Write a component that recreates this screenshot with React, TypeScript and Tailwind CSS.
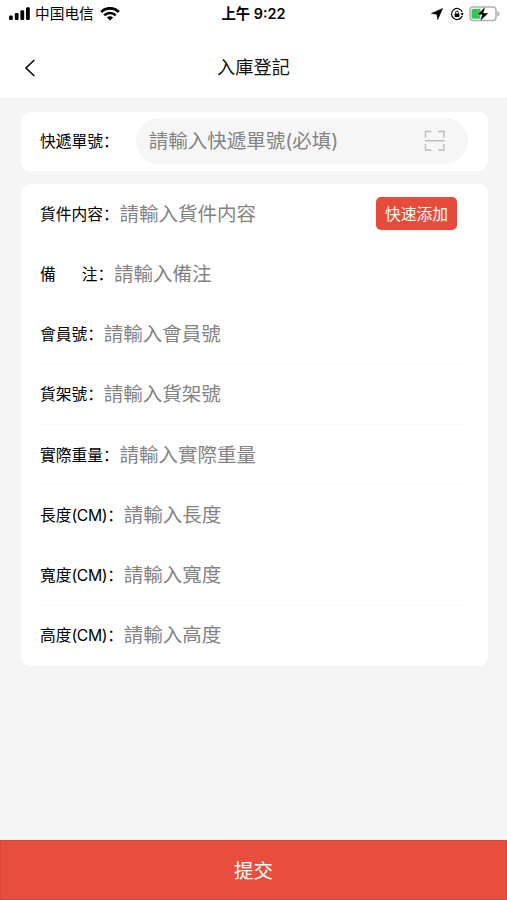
import { useState } from 'react'

type Field = {
  key: string
  label: string
  unit?: string
  placeholder: string
  line?: boolean
  action?: string
}

const FIELDS: Field[] = [
  { key: 'content', label: '貨件内容', placeholder: '請輸入貨件内容', action: '快速添加' },
  { key: 'remark', label: '備注', placeholder: '請輸入備注' },
  { key: 'member', label: '會員號', placeholder: '請輸入會員號', line: true },
  { key: 'shelf', label: '貨架號', placeholder: '請輸入貨架號', line: true },
  { key: 'weight', label: '實際重量', placeholder: '請輸入實際重量', line: true },
  { key: 'length', label: '長度', unit: '(CM)', placeholder: '請輸入長度' },
  { key: 'width', label: '寬度', unit: '(CM)', placeholder: '請輸入寬度', line: true },
  { key: 'height', label: '高度', unit: '(CM)', placeholder: '請輸入高度' },
]

const INPUT =
  'min-w-0 flex-1 bg-transparent text-[19.5px] text-[#333] outline-none placeholder:text-[#838383]'

function StatusBar() {
  return (
    <div className="grid h-7 grid-cols-3 items-center pl-[9px] pr-[7px] text-black">
      <div className="flex items-center">
        <svg width="22" height="14" viewBox="0 0 22 14" fill="currentColor">
          <rect x="0" y="8.5" width="3.8" height="4.5" rx="1.2" />
          <rect x="5.8" y="6" width="3.8" height="7" rx="1.2" />
          <rect x="11.4" y="3.2" width="3.8" height="9.8" rx="1.2" />
          <rect x="17" y="0.2" width="3.8" height="12.8" rx="1.2" />
        </svg>
        <span className="ml-[4px] text-[14.7px] leading-none">中国电信</span>
        <svg className="ml-[6px]" width="20" height="14" viewBox="0 0 20 14" fill="none" stroke="currentColor">
          <path d="M1.2 4.9a12.5 12.5 0 0 1 17.6 0" strokeWidth="2.8" />
          <path d="M4.3 8.4a8.1 8.1 0 0 1 11.4 0" strokeWidth="2.6" />
          <path d="M10 13.4 6.9 10.6a4.5 4.5 0 0 1 6.2 0z" fill="currentColor" stroke="none" />
        </svg>
      </div>
      <div className="pr-[2px] text-center text-[14.4px] font-semibold leading-none">上午 9:22</div>
      <div className="flex items-center justify-end">
        <svg width="12" height="12" viewBox="0 0 12 12" fill="currentColor">
          <path d="M11.6.5 6.7 11.6 5.9 6.3.5 5.4z" stroke="currentColor" strokeWidth="0.6" />
        </svg>
        <svg className="ml-[7px]" width="14" height="14" viewBox="0 0 14 14" fill="none" stroke="currentColor">
          <path d="M12.2 5A5.5 5.5 0 1 0 12.2 9" strokeWidth="1.2" />
          <path d="m10.4 6.2 3.2-.3-1 2.9z" fill="currentColor" stroke="none" />
          <rect x="4.6" y="6.5" width="4.8" height="3.5" rx="0.5" fill="currentColor" stroke="none" />
          <path d="M5.6 6.8V5.5a1.4 1.4 0 0 1 2.8 0v1.3" strokeWidth="0.9" />
        </svg>
        <svg className="ml-[5px]" width="31" height="16" viewBox="0 0 31 16">
          <rect x="1" y="1" width="26" height="13.4" rx="3.2" fill="none" stroke="#b0b0b0" strokeWidth="1.5" />
          <path d="M28.3 5c1.5.5 2.1 1.5 2.1 2.7s-.6 2.2-2.1 2.7z" fill="#b0b0b0" />
          <path d="M4.5 2.7h7v10h-7a2 2 0 0 1-2-2v-6a2 2 0 0 1 2-2z" fill="#35c759" />
          <path d="M16.4.4 8.2 8.8h4.9L10.9 15.4l8.6-8.5h-5z" fill="#000" stroke="#fff" strokeWidth="0.4" />
        </svg>
      </div>
    </div>
  )
}

function NavBar() {
  return (
    <div className="grid h-[69.5px] grid-cols-3 items-center pt-[11px]">
      <button className="w-10 pl-6" aria-label="返回">
        <svg width="12" height="18" viewBox="0 0 12 18" fill="none" stroke="#111" strokeWidth="1.7">
          <path d="M10.3 1 2 9l8.3 8" />
        </svg>
      </button>
      <h1 className="pb-[2px] text-center text-[18.2px] leading-none text-[#111]">入庫登記</h1>
    </div>
  )
}

function ScanIcon() {
  return (
    <svg className="shrink-0" width="22" height="22" viewBox="0 0 22 22" fill="none" stroke="#bdbdbd" strokeWidth="1.4">
      <path d="M1.5 7.5v-6h6M14 1.5h6v6M20 14v6h-6M7.5 20h-6v-6M1 10.8h19.5" />
    </svg>
  )
}

function Label({ text, unit }: { text: string; unit?: string }) {
  return (
    <span className="flex shrink-0 items-baseline whitespace-nowrap pt-[1.5px]">
      {/* 備注两字撑开对齐 */}
      {text === '備注' ? (
        <span className="flex gap-[26px]">
          <span>備</span>
          <span>注</span>
        </span>
      ) : (
        <span>{text}</span>
      )}
      {unit && <span className="tracking-[-0.4px]">{unit}</span>}
      <span>：</span>
    </span>
  )
}

export default function App() {
  const [tracking, setTracking] = useState('')
  const [values, setValues] = useState<Record<string, string>>({})

  return (
    <div className="flex h-[900px] w-full flex-col bg-[#f5f5f5] font-['Inter','Noto_Sans_CJK_SC',sans-serif] text-black">
      <header className="h-[97.5px] shrink-0 bg-white">
        <StatusBar />
        <NavBar />
      </header>

      <main className="flex-1 pl-[21px] pr-[19.5px] pt-[14px] text-[15.75px] leading-none">
        <div className="flex h-[59px] items-center rounded-[9px] bg-white pl-[19px] pr-5">
          <Label text="快遞單號" />
          <div className="ml-[17px] flex h-[46px] min-w-0 flex-1 items-center rounded-full bg-[#f6f6f6] pl-[13px] pr-[22px]">
            <input
              className={INPUT}
              placeholder="請輸入快遞單號(必填)"
              value={tracking}
              onChange={(e) => setTracking(e.target.value)}
            />
            <ScanIcon />
          </div>
        </div>

        <div className="mt-[13.8px] rounded-[9px] bg-white pl-[19px] pr-[24px]">
          {FIELDS.map((f) => (
            <div
              key={f.key}
              className={`flex h-[60.2px] items-center border-b ${f.line ? 'border-[#fafafa]' : 'border-transparent'}`}
            >
              <Label text={f.label} unit={f.unit} />
              <input
                className={`${INPUT} ml-[0.8px]`}
                placeholder={f.placeholder}
                value={values[f.key] ?? ''}
                onChange={(e) => setValues({ ...values, [f.key]: e.target.value })}
              />
              {f.action && (
                <button className="mr-[6.5px] h-[33px] w-[81px] rounded-[5px] bg-[#e64b3b] pt-[2px] text-[15.75px] text-white">
                  {f.action}
                </button>
              )}
            </div>
          ))}
        </div>
      </main>

      <button className="h-[60px] shrink-0 border border-[#d94638] bg-[#e84e3d] pt-[3px] text-[19.5px] leading-none text-white">
        提交
      </button>
    </div>
  )
}
